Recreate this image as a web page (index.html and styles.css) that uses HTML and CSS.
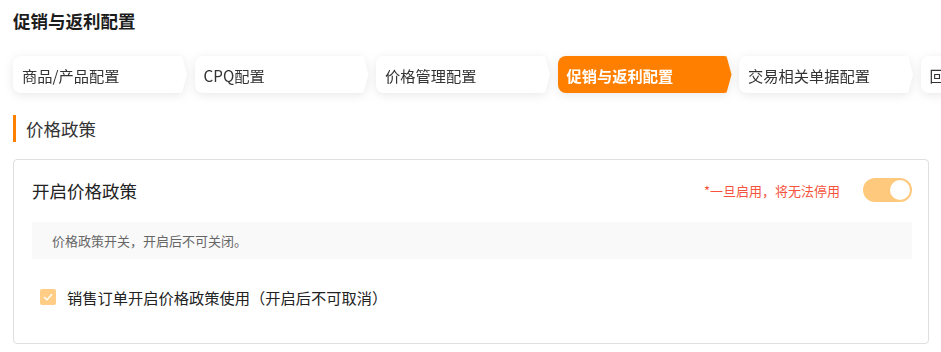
FILE: index.html
```html
<!DOCTYPE html>
<html lang="zh-CN">
<head>
<meta charset="utf-8">
<title>促销与返利配置</title>
<link rel="stylesheet" href="styles.css">
</head>
<body>
<div class="page">
  <h1 class="page-title">促销与返利配置</h1>
  <div class="tabs">
    <div class="tab">商品/产品配置</div>
    <div class="tab">CPQ配置</div>
    <div class="tab">价格管理配置</div>
    <div class="tab active">促销与返利配置</div>
    <div class="tab">交易相关单据配置</div>
    <div class="tab">回款相关配置</div>
  </div>
  <h2 class="section-title">价格政策</h2>
  <div class="card">
    <div class="card-head">
      <div class="card-title">开启价格政策</div>
      <div class="card-actions">
        <span class="warn">*一旦启用，将无法停用</span>
        <span class="switch"><span class="knob"></span></span>
      </div>
    </div>
    <div class="note">价格政策开关，开启后不可关闭。</div>
    <label class="check-row">
      <span class="checkbox">
        <svg width="10" height="8" viewBox="0 0 10 8"><path d="M1 4 L4 6.8 L9 1.2" fill="none" stroke="#fff" stroke-width="1.4"/></svg>
      </span>
      <span class="check-label">销售订单开启价格政策使用（开启后不可取消）</span>
    </label>
  </div>
</div>
</body>
</html>
```
FILE: styles.css
```css
* { box-sizing: border-box; }
html, body { margin: 0; padding: 0; background: #fff; overflow: hidden; }
body {
  font-family: "Noto Sans CJK SC", "Noto Sans", sans-serif;
  color: #333;
}
.page { padding: 0 12px 0 13px; }
.page-title {
  margin: 0;
  padding-top: 8px;
  font-size: 17.5px;
  line-height: 25px;
  font-weight: 700;
  color: #1c1c1c;
}
.tabs {
  display: flex;
  gap: 7.5px;
  margin: 23px -13px 0 0;
  filter: drop-shadow(0 2px 5px rgba(0,0,0,0.09));
}
.tab {
  flex: 0 0 174px;
  height: 37px;
  display: flex;
  align-items: center;
  padding-left: 9px;
  background: #fff;
  border-radius: 8px;
  font-size: 15.25px;
  color: #333;
  white-space: nowrap;
  clip-path: polygon(0 0, calc(100% - 5px) 0, 100% 50%, calc(100% - 5px) 100%, 0 100%);
}
.tab.active {
  background: #ff8000;
  color: #fff;
  font-weight: 700;
}
.section-title {
  margin: 22px 0 0;
  height: 27px;
  line-height: 27px;
  border-left: 3px solid #ff8000;
  padding-left: 10px;
  font-size: 17.5px;
  font-weight: 400;
  color: #333;
}
.card {
  margin-top: 17px;
  width: 916px;
  border: 1px solid #dfdfe3;
  border-radius: 4px;
  padding: 18px 16px 38px 18px;
}
.card-head {
  display: flex;
  align-items: center;
  justify-content: space-between;
  height: 24px;
}
.card-title { font-size: 17.5px; color: #222; }
.card-actions { display: flex; align-items: center; gap: 23px; }
.warn { font-size: 13px; color: #f5533d; }
.switch {
  width: 49px;
  height: 24px;
  border-radius: 12px;
  background: #ffc97d;
  display: flex;
  align-items: center;
  justify-content: flex-end;
  padding-right: 2px;
}
.knob {
  width: 20px;
  height: 20px;
  border-radius: 50%;
  background: #fff;
}
.note {
  margin-top: 20px;
  height: 37px;
  line-height: 37px;
  background: #f9f9f9;
  padding-left: 20px;
  font-size: 13px;
  color: #666;
}
.check-row {
  margin-top: 30px;
  padding-left: 8px;
  display: flex;
  align-items: center;
  height: 16px;
  gap: 11px;
}
.checkbox {
  width: 16px;
  height: 16px;
  border-radius: 2px;
  background: #ffcd85;
  display: flex;
  align-items: center;
  justify-content: center;
}
.check-label { font-size: 15.25px; color: #222; }
```
